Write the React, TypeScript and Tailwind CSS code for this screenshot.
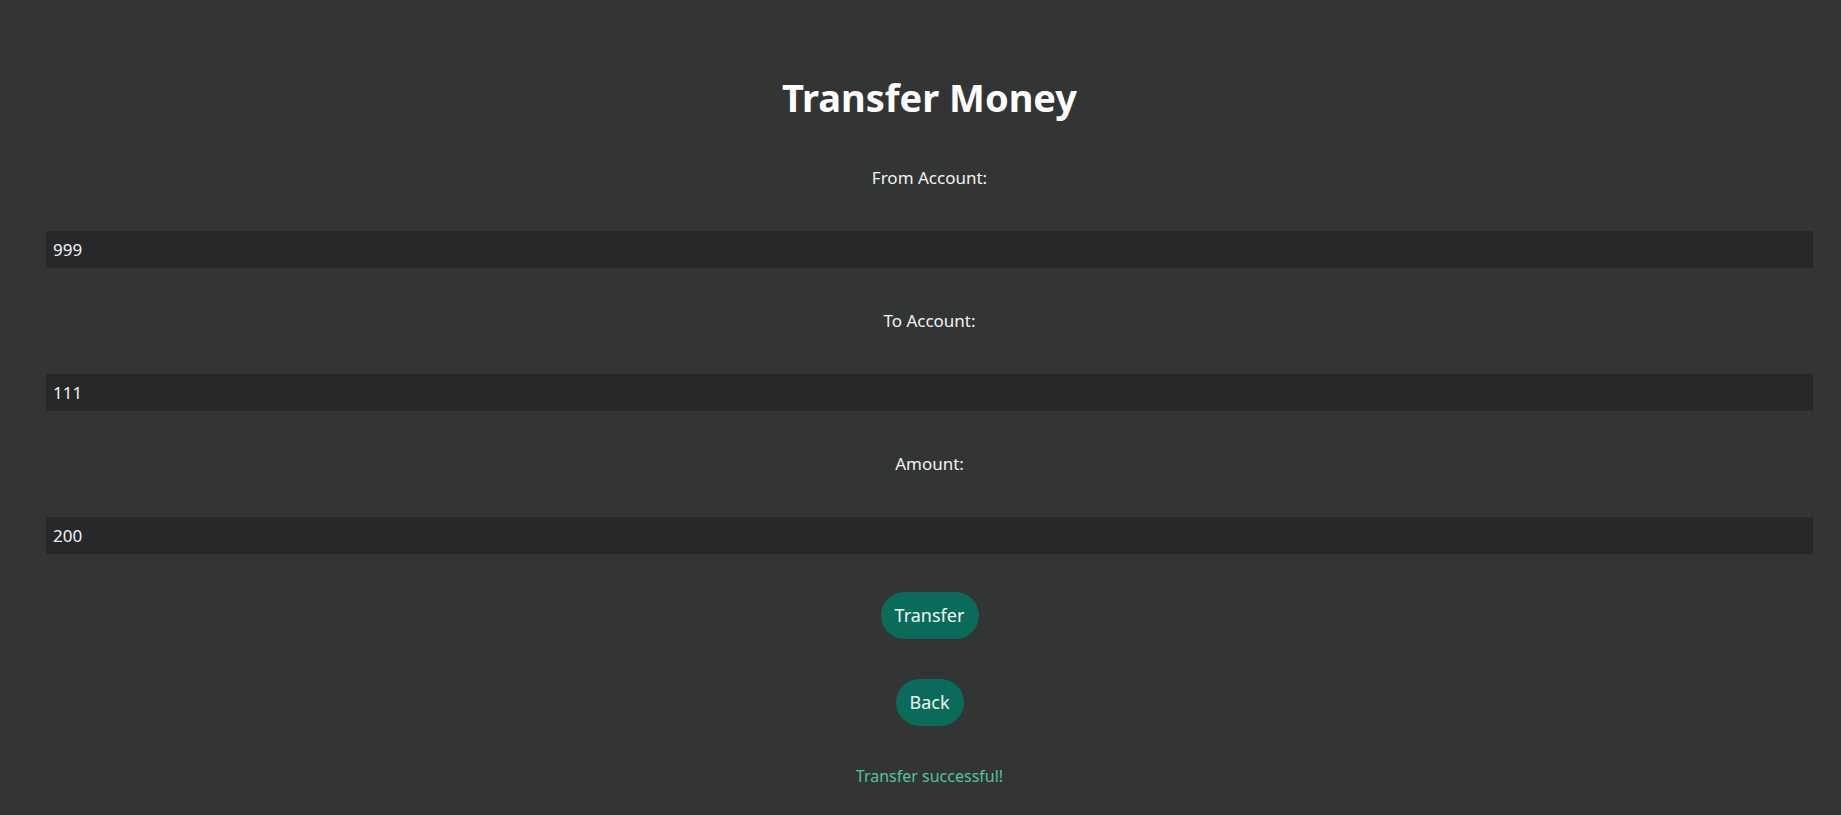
import React from "react";

export default function App() {
  const font = { fontFamily: '"Noto Sans", "Open Sans", sans-serif' };
  return (
    <div className="min-h-[815px] w-full bg-[#333535] text-white" style={font}>
      <div className="ml-[46px] w-[1767px] flex flex-col items-center">
        <h1 className="mt-[75px] h-[44px] leading-[44px] text-[38px] font-bold text-white">Transfer Money</h1>
        <label className="mt-[47px] h-[24px] leading-[24px] text-[17px] text-[#f2f2f2]">From Account:</label>
        <div className="mt-[41px] self-stretch h-[37px] bg-[#262829] flex items-center pl-[7px] text-[17px] text-[#f2f2f2]">999</div>
        <label className="mt-[41px] h-[24px] leading-[24px] text-[17px] text-[#f2f2f2]">To Account:</label>
        <div className="mt-[41px] self-stretch h-[37px] bg-[#262829] flex items-center pl-[7px] text-[17px] text-[#f2f2f2]">111</div>
        <label className="mt-[41px] h-[24px] leading-[24px] text-[17px] text-[#f2f2f2]">Amount:</label>
        <div className="mt-[41px] self-stretch h-[37px] bg-[#262829] flex items-center pl-[7px] text-[17px] text-[#f2f2f2]">200</div>
        <button className="mt-[38px] h-[47px] w-[98px] rounded-full bg-[#0b6b5b] text-[18px] text-[#eef8f5]">Transfer</button>
        <button className="mt-[40px] h-[47px] w-[68px] rounded-full bg-[#0b6b5b] text-[18px] text-[#eef8f5]">Back</button>
        <p className="mt-[38px] h-[24px] leading-[24px] text-[16px] text-[#4fc3a1]">Transfer successful!</p>
      </div>
    </div>
  );
}
